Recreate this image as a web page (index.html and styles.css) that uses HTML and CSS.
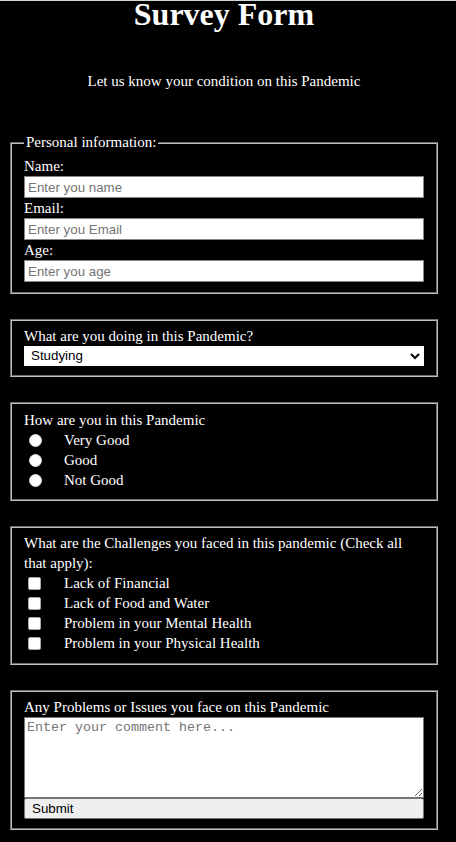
FILE: index.html
```html
<!DOCTYPE html>
<html lang="en">
<head>
<meta charset="utf-8">
<title>Survey Form</title>
<link rel="stylesheet" href="styles.css">
</head>
<body>
<div class="page">
  <h1 class="title">Survey Form</h1>
  <p class="subtitle">Let us know your condition on this Pandemic</p>
  <form class="survey">
    <fieldset class="group">
      <legend class="group-legend">Personal information:</legend>
      <label class="field-label" for="name">Name:</label>
      <input class="text-input" id="name" type="text" placeholder="Enter you name">
      <label class="field-label" for="email">Email:</label>
      <input class="text-input" id="email" type="email" placeholder="Enter you Email">
      <label class="field-label" for="age">Age:</label>
      <input class="text-input" id="age" type="number" placeholder="Enter you age">
    </fieldset>

    <fieldset class="group">
      <label class="field-label" for="doing">What are you doing in this Pandemic?</label>
      <select class="select-input" id="doing">
        <option>Studying</option>
        <option>Working</option>
        <option>Nothing</option>
      </select>
    </fieldset>

    <fieldset class="group">
      <p class="question">How are you in this Pandemic</p>
      <label class="choice"><input class="radio" type="radio" name="how"><span class="choice-text">Very Good</span></label>
      <label class="choice"><input class="radio" type="radio" name="how"><span class="choice-text">Good</span></label>
      <label class="choice"><input class="radio" type="radio" name="how"><span class="choice-text">Not Good</span></label>
    </fieldset>

    <fieldset class="group">
      <p class="question">What are the Challenges you faced in this pandemic (Check all that apply):</p>
      <label class="choice"><input class="check" type="checkbox"><span class="choice-text">Lack of Financial</span></label>
      <label class="choice"><input class="check" type="checkbox"><span class="choice-text">Lack of Food and Water</span></label>
      <label class="choice"><input class="check" type="checkbox"><span class="choice-text">Problem in your Mental Health</span></label>
      <label class="choice"><input class="check" type="checkbox"><span class="choice-text">Problem in your Physical Health</span></label>
    </fieldset>

    <fieldset class="group">
      <label class="field-label" for="comment">Any Problems or Issues you face on this Pandemic</label>
      <textarea class="comment" id="comment" placeholder="Enter your comment here..."></textarea>
      <button class="submit" type="submit">Submit</button>
    </fieldset>
  </form>
</div>
</body>
</html>
```

FILE: styles.css
```css
html, body {
  margin: 0;
  padding: 0;
  background: #000;
}

body {
  border-top: 1px solid #d3d6d9;
  color: #fff;
  font-family: "Liberation Serif", "Times New Roman", serif;
  font-size: 15px;
}

.page {
  width: 448px;
}

.title {
  margin: 0;
  font-size: 32px;
  font-weight: bold;
  line-height: 27px;
  text-align: center;
}

.subtitle {
  margin: 45px 0 44px;
  text-align: center;
}

.survey {
  display: flex;
  flex-direction: column;
  gap: 25px;
  margin: 0 10px;
}

.group {
  margin: 0;
  padding: 5.25px 12px 9.375px;
  border: 2px groove #c0c0c0;
  min-width: 0;
}

.group-legend {
  padding: 0 2px;
}

.field-label {
  display: block;
  line-height: 20px;
}

.question {
  margin: 0;
  line-height: 20px;
}

.text-input {
  display: block;
  box-sizing: border-box;
  width: 100%;
  height: 22px;
  margin: 0;
  padding: 1px 3px;
  border: 1px solid #858585;
  background: #fff;
  font-family: "Liberation Sans", Arial, sans-serif;
  font-size: 13.33px;
  color: #000;
}

.text-input::placeholder,
.comment::placeholder {
  color: #757575;
}

.select-input {
  display: block;
  box-sizing: border-box;
  width: 100%;
  height: 20px;
  margin: 0;
  padding: 0 2px;
  border: 1px solid #fff;
  border-radius: 0;
  background-color: #fff;
  color: #000;
  font-family: "Liberation Sans", Arial, sans-serif;
  font-size: 13.33px;
}

.choice {
  display: block;
  height: 20px;
  line-height: 20px;
}

.radio {
  appearance: none;
  -webkit-appearance: none;
  box-sizing: border-box;
  width: 13px;
  height: 13px;
  margin: 0 3px 0 5px;
  border: 1px solid #d8d8d8;
  border-radius: 50%;
  background: #fff;
  vertical-align: -2px;
}

.check {
  appearance: none;
  -webkit-appearance: none;
  box-sizing: border-box;
  width: 13px;
  height: 13px;
  margin: 0 4px 0 4px;
  border: 1px solid #a8a8a8;
  border-radius: 2px;
  background: #fff;
  vertical-align: -2px;
}

.choice-text {
  margin-left: 19px;
}

.comment {
  display: block;
  box-sizing: border-box;
  width: 100%;
  height: 81px;
  margin: 0;
  padding: 2px;
  border: 1px solid #767676;
  background: #fff;
  font-family: "Liberation Mono", "Courier New", monospace;
  font-size: 13.33px;
  color: #000;
}

.submit {
  display: block;
  box-sizing: border-box;
  width: 100%;
  height: 21px;
  margin: 0;
  padding: 0 7px;
  border: 1px solid #767676;
  border-radius: 2px;
  background: #efefef;
  color: #000;
  font-family: "Liberation Sans", Arial, sans-serif;
  font-size: 13.33px;
  text-align: left;
}
```
